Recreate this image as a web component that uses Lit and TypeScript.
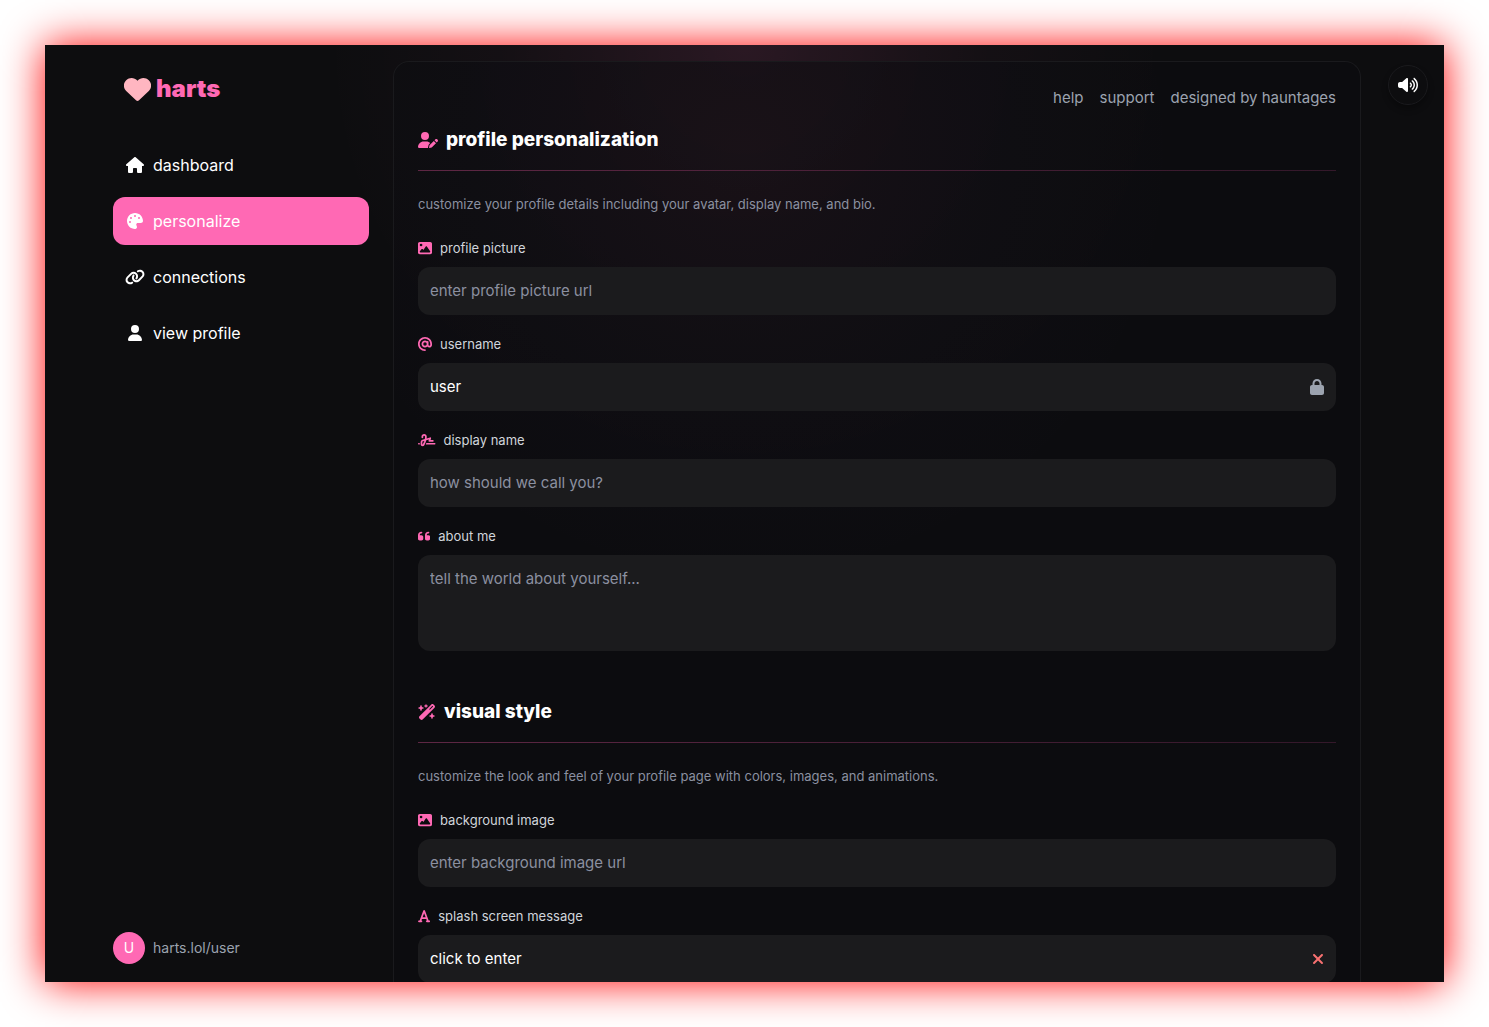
import { LitElement, html, css, svg, nothing } from "lit";
import { customElement, property } from "lit/decorators.js";

/* Icon table: name -> [viewBox width, path]; every viewBox is 512 tall. */
const ICONS: Record<string, [number, string]> = {
  house: [576, "M575.8 255.5c0 18-15 32.1-32 32.1h-32l.7 160.2c0 2.7-.2 5.4-.5 8.1V472c0 22.1-17.9 40-40 40H456c-1.1 0-2.2 0-3.3-.1c-1.4 .1-2.8 .1-4.2 .1H416 392c-22.1 0-40-17.9-40-40V448 384c0-17.7-14.3-32-32-32H256c-17.7 0-32 14.3-32 32v64 24c0 22.1-17.9 40-40 40H160 128.1c-1.5 0-3-.1-4.5-.2c-1.2 .1-2.4 .2-3.6 .2H104c-22.1 0-40-17.9-40-40V360c0-.9 0-1.9 .1-2.8V287.6H32c-18 0-32-14-32-32.1c0-9 3-17 10-24L266.4 8c7-7 15-8 22-8s15 2 21 7L564.8 231.5c8 7 12 15 11 24z"],
  palette: [512, "M512 256c0 .9 0 1.8 0 2.7c-.4 36.5-33.6 61.3-70.1 61.3H344c-26.5 0-48 21.5-48 48c0 3.4 .4 6.7 1 9.9c2.1 10.2 6.5 20 10.8 29.9c6.1 13.8 12.1 27.5 12.1 42c0 31.8-21.6 60.7-53.4 62c-3.5 .1-7 .2-10.6 .2C114.6 512 0 397.4 0 256S114.6 0 256 0S512 114.6 512 256zM128 288a32 32 0 1 0 -64 0 32 32 0 1 0 64 0zm0-96a32 32 0 1 0 0-64 32 32 0 1 0 0 64zM288 96a32 32 0 1 0 -64 0 32 32 0 1 0 64 0zm96 96a32 32 0 1 0 0-64 32 32 0 1 0 0 64z"],
  link: [640, "M579.8 267.7c56.5-56.5 56.5-148 0-204.5c-50-50-128.8-56.5-186.3-15.4l-1.6 1.1c-14.4 10.3-17.7 30.3-7.4 44.6s30.3 17.7 44.6 7.4l1.6-1.1c32.1-22.9 76-19.3 103.8 8.6c31.5 31.5 31.5 82.5 0 114L422.3 334.8c-31.5 31.5-82.5 31.5-114 0c-27.9-27.9-31.5-71.8-8.6-103.8l1.1-1.6c10.3-14.4 6.9-34.4-7.4-44.6s-34.4-6.9-44.6 7.4l-1.1 1.6C206.5 251.2 213 330 263 380c56.5 56.5 148 56.5 204.5 0L579.8 267.7zM60.2 244.3c-56.5 56.5-56.5 148 0 204.5c50 50 128.8 56.5 186.3 15.4l1.6-1.1c14.4-10.3 17.7-30.3 7.4-44.6s-30.3-17.7-44.6-7.4l-1.6 1.1c-32.1 22.9-76 19.3-103.8-8.6C74 372 74 321 105.5 289.5L217.7 177.2c31.5-31.5 82.5-31.5 114 0c27.9 27.9 31.5 71.8 8.6 103.9l-1.1 1.6c-10.3 14.4-6.9 34.4 7.4 44.6s34.4 6.9 44.6-7.4l1.1-1.6C433.5 260.8 427 182 377 132c-56.5-56.5-148-56.5-204.5 0L60.2 244.3z"],
  user: [448, "M224 256A128 128 0 1 0 224 0a128 128 0 1 0 0 256zm-45.7 48C79.8 304 0 383.8 0 482.3C0 498.7 13.3 512 29.7 512H418.3c16.4 0 29.7-13.3 29.7-29.7C448 383.8 368.2 304 269.7 304H178.3z"],
  userPen: [640, "M224 256A128 128 0 1 0 224 0a128 128 0 1 0 0 256zm-45.7 48C79.8 304 0 383.8 0 482.3C0 498.7 13.3 512 29.7 512H322.8c-3.1-8.8-3.7-18.4-1.4-27.8l15-60.1c2.8-11.3 8.6-21.5 16.8-29.7l40.3-40.3c-32.1-31-75.7-50.1-123.9-50.1H178.3zm435.5-68.3c-15.6-15.6-40.9-15.6-56.6 0l-29.4 29.4 71 71 29.4-29.4c15.6-15.6 15.6-40.9 0-56.6l-14.4-14.4zM375.9 417c-4.1 4.1-7 9.2-8.4 14.9l-15 60.1c-1.4 5.5 .2 11.2 4.2 15.2s9.7 5.6 15.2 4.2l60.1-15c5.6-1.4 10.8-4.3 14.9-8.4L576.1 358.7l-71-71L375.9 417z"],
  image: [512, "M0 96C0 60.7 28.7 32 64 32H448c35.3 0 64 28.7 64 64V416c0 35.3-28.7 64-64 64H64c-35.3 0-64-28.7-64-64V96zM323.8 202.5c-4.5-6.6-11.9-10.5-19.8-10.5s-15.4 3.9-19.8 10.5l-87 127.6L170.7 297c-4.6-5.7-11.5-9-18.7-9s-14.2 3.3-18.7 9l-64 80c-5.8 7.2-6.9 17.1-2.9 25.4s12.4 13.6 21.6 13.6h96 32H424c8.9 0 17.1-4.9 21.2-12.8s3.6-17.4-1.4-24.7l-120-176zM112 192a48 48 0 1 0 0-96 48 48 0 1 0 0 96z"],
  at: [512, "M256 64C150 64 64 150 64 256s86 192 192 192c17.7 0 32 14.3 32 32s-14.3 32-32 32C114.6 512 0 397.4 0 256S114.6 0 256 0S512 114.6 512 256v32c0 53-43 96-96 96c-29.3 0-55.6-13.2-73.2-33.9C320 371.1 289.5 384 256 384c-70.7 0-128-57.3-128-128s57.3-128 128-128c27.9 0 53.7 8.9 74.7 24.1c5.7-5 13.1-8.1 21.3-8.1c17.7 0 32 14.3 32 32v80 32c0 17.7 14.3 32 32 32s32-14.3 32-32V256c0-106-86-192-192-192zm64 192a64 64 0 1 0 -128 0 64 64 0 1 0 128 0z"],
  signature: [640, "M192 128c0-17.7 14.3-32 32-32s32 14.3 32 32v7.8c0 27.7-2.4 55.3-7.1 82.5l-84.4 25.3c-40.6 12.2-68.4 49.6-68.4 92v71.9c0 40 32.5 72.5 72.5 72.5c26 0 50-13.9 62.9-36.5l13.9-24.3c26.8-47 46.5-97.7 58.4-150.5l94.4-28.3-12.5 37.5c-3.3 9.8-1.6 20.5 4.4 28.8s15.7 13.3 26 13.3H544c17.7 0 32-14.3 32-32s-14.3-32-32-32H460.4l18-53.9c3.8-11.3 .9-23.8-7.4-32.4s-20.7-11.8-32.2-8.4L316.4 198.1c2.4-20.7 3.6-41.4 3.6-62.3V128c0-53-43-96-96-96s-96 43-96 96v32c0 17.7 14.3 32 32 32s32-14.3 32-32V128zm-9.2 177l49-14.7c-10.4 33.8-24.5 66.4-42.1 97.2l-13.9 24.3c-1.5 2.6-4.3 4.3-7.4 4.3c-4.7 0-8.5-3.8-8.5-8.5V335.6c0-14.1 9.3-26.6 22.8-30.7zM24 368c-13.3 0-24 10.7-24 24s10.7 24 24 24H64.3c-.2-2.8-.3-5.6-.3-8.5V368H24zm592 48c13.3 0 24-10.7 24-24s-10.7-24-24-24H305.9c-6.7 16.3-14.2 32.3-22.3 48H616z"],
  quote: [448, "M0 216C0 149.7 53.7 96 120 96h8c17.7 0 32 14.3 32 32s-14.3 32-32 32h-8c-30.9 0-56 25.1-56 56v8h64c35.3 0 64 28.7 64 64v64c0 35.3-28.7 64-64 64H64c-35.3 0-64-28.7-64-64V320 288 216zm256 0c0-66.3 53.7-120 120-120h8c17.7 0 32 14.3 32 32s-14.3 32-32 32h-8c-30.9 0-56 25.1-56 56v8h64c35.3 0 64 28.7 64 64v64c0 35.3-28.7 64-64 64H320c-35.3 0-64-28.7-64-64V320 288 216z"],
  wand: [576, "M234.7 42.7L197 56.8c-3 1.1-5 4-5 7.2s2 6.1 5 7.2l37.7 14.1L248.8 123c1.1 3 4 5 7.2 5s6.1-2 7.2-5l14.1-37.7L315 71.2c3-1.1 5-4 5-7.2s-2-6.1-5-7.2L277.3 42.7 263.2 5c-1.1-3-4-5-7.2-5s-6.1 2-7.2 5L234.7 42.7zM46.1 395.4c-18.7 18.7-18.7 49.1 0 67.9l34.6 34.6c18.7 18.7 49.1 18.7 67.9 0L529.9 116.5c18.7-18.7 18.7-49.1 0-67.9L495.3 14.1c-18.7-18.7-49.1-18.7-67.9 0L46.1 395.4zM484.6 82.6l-105 105-23.3-23.3 105-105 23.3 23.3zM7.5 117.2C3 118.9 0 123.2 0 128s3 9.1 7.5 10.8L64 160l21.2 56.5c1.7 4.5 6 7.5 10.8 7.5s9.1-3 10.8-7.5L128 160l56.5-21.2c4.5-1.7 7.5-6 7.5-10.8s-3-9.1-7.5-10.8L128 96 106.8 39.5C105.1 35 100.8 32 96 32s-9.1 3-10.8 7.5L64 96 7.5 117.2zm352 256c-4.5 1.7-7.5 6-7.5 10.8s3 9.1 7.5 10.8L416 416l21.2 56.5c1.7 4.5 6 7.5 10.8 7.5s9.1-3 10.8-7.5L480 416l56.5-21.2c4.5-1.7 7.5-6 7.5-10.8s-3-9.1-7.5-10.8L480 352l-21.2-56.5c-1.7-4.5-6-7.5-10.8-7.5s-9.1 3-10.8 7.5L416 352l-56.5 21.2z"],
  font: [448, "M254 52.8C249.3 40.3 237.3 32 224 32s-25.3 8.3-30 20.8L57.8 416H32c-17.7 0-32 14.3-32 32s14.3 32 32 32h96c17.7 0 32-14.3 32-32s-14.3-32-32-32h-1.8l18-48H303.8l18 48H320c-17.7 0-32 14.3-32 32s14.3 32 32 32h96c17.7 0 32-14.3 32-32s-14.3-32-32-32H390.2L254 52.8zM279.8 304H168.2L224 155.1 279.8 304z"],
  lock: [448, "M144 144v48H304V144c0-44.2-35.8-80-80-80s-80 35.8-80 80zM80 192V144C80 64.5 144.5 0 224 0s144 64.5 144 144v48h16c35.3 0 64 28.7 64 64V448c0 35.3-28.7 64-64 64H64c-35.3 0-64-28.7-64-64V256c0-35.3 28.7-64 64-64H80z"],
  xmark: [384, "M342.6 150.6c12.5-12.5 12.5-32.8 0-45.3s-32.8-12.5-45.3 0L192 210.7 86.6 105.4c-12.5-12.5-32.8-12.5-45.3 0s-12.5 32.8 0 45.3L146.7 256 41.4 361.4c-12.5 12.5-12.5 32.8 0 45.3s32.8 12.5 45.3 0L192 301.3 297.4 406.6c12.5 12.5 32.8 12.5 45.3 0s12.5-32.8 0-45.3L237.3 256 342.6 150.6z"],
  volume: [640, "M533.6 32.5C598.5 85.2 640 165.8 640 256s-41.5 170.7-106.4 223.5c-10.3 8.4-25.4 6.8-33.8-3.5s-6.8-25.4 3.5-33.8C557.5 398.2 592 331.2 592 256s-34.5-142.2-88.7-186.3c-10.3-8.4-11.8-23.5-3.5-33.8s23.5-11.8 33.8-3.5zM473.1 107c43.2 35.2 70.9 88.9 70.9 149s-27.7 113.8-70.9 149c-10.3 8.4-25.4 6.8-33.8-3.5s-6.8-25.4 3.5-33.8C475.3 341.3 496 301.1 496 256s-20.7-85.3-53.2-111.8c-10.3-8.4-11.8-23.5-3.5-33.8s23.5-11.8 33.8-3.5zm-60.5 74.5C434.1 199.1 448 225.9 448 256s-13.9 56.9-35.4 74.5c-10.3 8.4-25.4 6.8-33.8-3.5s-6.8-25.4 3.5-33.8C393.1 284.4 400 271 400 256s-6.9-28.4-17.7-37.3c-10.3-8.4-11.8-23.5-3.5-33.8s23.5-11.8 33.8-3.5zM301.1 34.8C312.6 40 320 51.4 320 64V448c0 12.6-7.4 24-18.9 29.2s-25 3.1-34.4-5.3L131.8 352H64c-35.3 0-64-28.7-64-64V224c0-35.3 28.7-64 64-64h67.8L266.7 40.1c9.4-8.4 22.9-10.4 34.4-5.3z"],
};

@customElement("h-icon")
class HIcon extends LitElement {
  @property() name = "";

  static styles = css`
    :host { display: inline-flex; flex: none; }
    svg { height: 1em; width: auto; fill: currentColor; display: block; }
  `;

  render() {
    const [w, d] = ICONS[this.name];
    return html`<svg viewBox="0 0 ${w} 512" aria-hidden="true">${svg`<path d=${d}></path>`}</svg>`;
  }
}

interface FieldSpec {
  id: string;
  icon: string;
  label: string;
  placeholder?: string;
  value?: string;
  kind?: "text" | "locked" | "clearable" | "area";
}

@customElement("form-field")
class FormField extends LitElement {
  @property({ attribute: false }) spec!: FieldSpec;

  static styles = css`
    :host { display: block; }
    .label {
      display: flex; align-items: center; gap: 8px; margin-bottom: 9px;
      font-size: 13px; line-height: 20px; color: #d1d5db;
    }
    .label h-icon { color: #ff69b4; font-size: 14px; }
    .box {
      display: flex; align-items: center; gap: 8px; box-sizing: border-box;
      min-height: 48px; padding: 12px; border-radius: 12px; background: #1b1b1d;
    }
    .input {
      flex: 1; min-width: 0; border: 0; margin: 0; padding: 0; outline: 0;
      background: transparent; color: #fff; font: inherit; font-size: 15px; line-height: 24px;
      height: 24px; resize: none;
    }
    .area { height: 72px; }
    .input::placeholder { color: #8b90a0; opacity: 1; }
    .lock { color: #9ca3af; font-size: 16px; }
    .clear {
      display: flex; border: 0; margin: 0; padding: 0; background: none;
      color: #f87171; font-size: 16px; cursor: pointer;
    }
  `;

  private control() {
    const s = this.spec;
    if (s.kind === "area") {
      return html`<textarea class="input area" id=${s.id} placeholder=${s.placeholder ?? ""}></textarea>`;
    }
    return html`<input class="input" type="text" id=${s.id} .value=${s.value ?? ""}
      placeholder=${s.placeholder ?? ""} ?readonly=${s.kind === "locked"} />`;
  }

  render() {
    const s = this.spec;
    return html`
      <label class="label" for=${s.id}><h-icon name=${s.icon}></h-icon>${s.label}</label>
      <div class="box">
        ${this.control()}
        ${s.kind === "locked" ? html`<h-icon class="lock" name="lock"></h-icon>` : nothing}
        ${s.kind === "clearable"
          ? html`<button class="clear" aria-label="clear"><h-icon name="xmark"></h-icon></button>`
          : nothing}
      </div>
    `;
  }
}

const NAV = [
  { icon: "house", text: "dashboard" },
  { icon: "palette", text: "personalize", active: true },
  { icon: "link", text: "connections" },
  { icon: "user", text: "view profile" },
];

const SECTIONS: { icon: string; title: string; intro: string; fields: FieldSpec[] }[] = [
  {
    icon: "userPen",
    title: "profile personalization",
    intro: "customize your profile details including your avatar, display name, and bio.",
    fields: [
      { id: "picture", icon: "image", label: "profile picture", placeholder: "enter profile picture url" },
      { id: "username", icon: "at", label: "username", value: "user", kind: "locked" },
      { id: "display", icon: "signature", label: "display name", placeholder: "how should we call you?" },
      { id: "about", icon: "quote", label: "about me", placeholder: "tell the world about yourself...", kind: "area" },
    ],
  },
  {
    icon: "wand",
    title: "visual style",
    intro: "customize the look and feel of your profile page with colors, images, and animations.",
    fields: [
      { id: "background", icon: "image", label: "background image", placeholder: "enter background image url" },
      { id: "splash", icon: "font", label: "splash screen message", value: "click to enter", kind: "clearable" },
    ],
  },
];

@customElement("app-root")
class AppRoot extends LitElement {
  static styles = css`
    :host {
      display: block; box-sizing: border-box; height: 100vh; padding: 45px;
      background: #fff; overflow: hidden;
      font-family: Inter, "Liberation Sans", sans-serif; font-size: 16px; line-height: 24px;
      color: #fff;
    }
    a { color: inherit; text-decoration: none; }
    .frame {
      position: relative; box-sizing: border-box; height: 100%; padding-right: 15px;
      background:
        radial-gradient(circle at 50% 0, rgba(255, 105, 180, 0.12), rgba(255, 105, 180, 0.03) 240px, transparent 420px),
        #0d0d0f;
      box-shadow: 0 0 40px red;
    }
    .shell {
      box-sizing: border-box; display: flex; gap: 24px; height: 100%;
      max-width: 1280px; margin: 0 auto; padding: 16px 16px 0; overflow: hidden;
    }
    .side {
      flex: none; width: 256px; display: flex; flex-direction: column;
      box-sizing: border-box; padding-bottom: 18px;
    }
    .brand {
      display: flex; align-items: center; gap: 5px; padding: 12px 11px;
      font-size: 24px; line-height: 32px; font-weight: 900; color: #ff69b4;
    }
    .heart { width: 27px; height: 23px; fill: #ffb6c1; }
    .nav { display: flex; flex-direction: column; gap: 8px; margin-top: 24px; }
    .item {
      display: flex; align-items: center; gap: 8px; padding: 12px; border-radius: 12px;
    }
    .active { background: #ff69b4; }
    .slot { width: 20px; display: flex; justify-content: center; }
    .account {
      display: flex; align-items: center; gap: 8px; margin-top: auto;
      font-size: 14px; line-height: 20px; color: #9ca3af;
    }
    .avatar {
      width: 32px; height: 32px; border-radius: 50%; background: #ff69b4; color: #fff;
      display: flex; align-items: center; justify-content: center;
    }
    .main {
      flex: 1; min-width: 0; box-sizing: border-box; padding: 24px;
      border: 1px solid #1a1a1d; border-bottom: 0; border-radius: 16px 16px 0 0;
      background:
        radial-gradient(circle at 36% 90px, rgba(255, 105, 180, 0.04), rgba(120, 60, 180, 0.02) 260px, transparent 440px),
        rgba(13, 13, 15, 0.85);
      overflow: hidden;
    }
    .links {
      display: flex; justify-content: flex-end; gap: 16px; margin-bottom: 16px;
      font-size: 15px; color: #9ca3af;
    }
    .section { margin-bottom: 47px; }
    .title {
      display: flex; align-items: center; gap: 8px; margin: 0; padding-bottom: 16px;
      font-size: 19px; line-height: 28px; font-weight: 800;
    }
    .title h-icon { font-size: 16px; color: #ff69b4; }
    .rule { height: 1px; background: linear-gradient(90deg, #5e2744, #34182a); }
    .intro { margin: 23px 0 24px; font-size: 13px; line-height: 20px; color: #8b90a0; }
    .fields { display: flex; flex-direction: column; gap: 19px; }
    .sound {
      position: absolute; top: 20px; right: 16px; width: 40px; height: 40px; padding: 0;
      display: flex; align-items: center; justify-content: center;
      border: 1px solid #1a1a1d; border-radius: 50%; background: #0d0d0f; color: #fff;
      font-size: 16px; box-shadow: 0 4px 6px rgba(0, 0, 0, 0.3); cursor: pointer;
    }
  `;

  render() {
    return html`
      <div class="frame">
        <div class="shell">
          <aside class="side">
            <a class="brand" href="#">
              <svg class="heart" viewBox="0 0 27 23" aria-hidden="true">
                <path d="M13.5 23c-.6 0-1-.3-1.5-.8L2.2 13C-.9 9.8-.8 5 2.2 2.2 5.5-.8 10.4-.6 13.5 2.8 16.6-.6 21.5-.8 24.8 2.2 27.8 5 27.9 9.8 24.8 13L15 22.2c-.5.5-.9.8-1.5.8z"></path>
              </svg>
              harts
            </a>
            <nav class="nav">
              ${NAV.map((n) => html`
                <a class="item ${n.active ? "active" : ""}" href="#">
                  <span class="slot"><h-icon name=${n.icon}></h-icon></span>${n.text}
                </a>`)}
            </nav>
            <div class="account"><span class="avatar">U</span>harts.lol/user</div>
          </aside>
          <main class="main">
            <div class="links">
              <a href="#">help</a><a href="#">support</a><a href="#">designed by hauntages</a>
            </div>
            ${SECTIONS.map((s) => html`
              <section class="section">
                <h2 class="title"><h-icon name=${s.icon}></h-icon>${s.title}</h2>
                <div class="rule"></div>
                <p class="intro">${s.intro}</p>
                <div class="fields">${s.fields.map((f) => html`<form-field .spec=${f}></form-field>`)}</div>
              </section>`)}
          </main>
        </div>
        <button class="sound" aria-label="sound"><h-icon name="volume"></h-icon></button>
      </div>
    `;
  }
}
